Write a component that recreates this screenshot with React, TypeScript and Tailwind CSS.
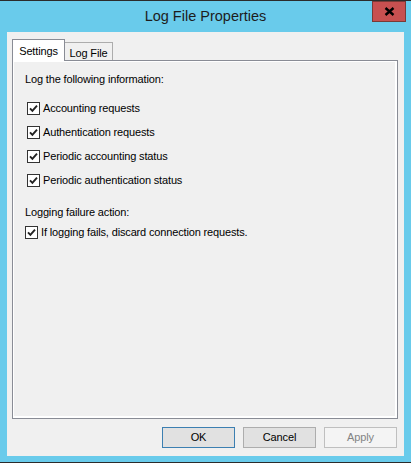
import React from "react";

const font = { fontFamily: '"Liberation Sans", Arial, sans-serif' };

function Check({ className = "" }: { className?: string }) {
  return (
    <span
      className={`flex h-[13px] w-[13px] shrink-0 items-center justify-center border border-[#333333] bg-white ${className}`}
    >
      <svg width="9" height="9" viewBox="0 0 9 9">
        <path d="M1 4.3 L3.4 6.8 L8 1.6" fill="none" stroke="#222222" strokeWidth="1.9" />
      </svg>
    </span>
  );
}

function CheckRow({ label, className = "" }: { label: string; className?: string }) {
  return (
    <div className={`flex h-[13px] items-center gap-[3px] ${className}`}>
      <Check />
      <span className="leading-none">{label}</span>
    </div>
  );
}

const logItems = [
  "Accounting requests",
  "Authentication requests",
  "Periodic accounting status",
  "Periodic authentication status",
];

export default function App() {
  return (
    <div
      className="flex h-[463px] w-[411px] flex-col border-y border-[#2b2b2b] bg-[#69cbeb] text-[11px] tracking-[-0.15px] text-black"
      style={font}
    >
      {/* title bar */}
      <div className="relative flex h-[31px] shrink-0 items-center justify-center">
        <span className="text-[14.5px] tracking-normal text-[#1d1d1d]">Log File Properties</span>
        <button className="absolute right-[5px] top-0 flex h-[21px] w-[34px] items-center justify-center border border-[#7a3a36] bg-[#c75050]">
          <svg width="11" height="9" viewBox="0 0 11 9">
            <path d="M1.5 1 L9.5 8 M9.5 1 L1.5 8" stroke="#000" strokeWidth="2.4" />
          </svg>
        </button>
      </div>

      {/* client area */}
      <div className="mx-[7px] mb-[6px] flex flex-1 flex-col bg-[#f0f0f0] pl-[5px] pr-[6px] pt-[7px]">
        {/* tabs */}
        <div className="flex h-[21px] items-end">
          <div className="relative z-10 -mb-px flex h-[22px] w-[53px] items-start justify-center border border-b-0 border-[#898c95] bg-white pt-[3px]">
            Settings
          </div>
          <div className="flex h-[18px] w-[48px] items-start justify-center border border-b-0 border-l-0 border-[#acacac] bg-[#f0f0f0] pt-[2px]">
            Log File
          </div>
        </div>

        {/* panel */}
        <div className="h-[359px] border border-[#898c95]">
          <div className="h-full border-b-2 border-l border-r-2 border-t border-white px-[11px] pt-[10px]">
            <div className="leading-[15px]">Log the following information:</div>
            <div className="mt-[15px] flex flex-col gap-[11px] pl-[2px]">
              {logItems.map((t) => (
                <CheckRow key={t} label={t} />
              ))}
            </div>
            <div className="mt-[18px] leading-[15px]">Logging failure action:</div>
            <CheckRow className="mt-[6px]" label="If logging fails, discard connection requests." />
          </div>
        </div>

        {/* buttons */}
        <div className="mt-[8px] flex justify-end gap-[8px] pr-px">
          <button className="h-[21px] w-[73px] border border-[#3c7fb1] bg-[#e1e1e1]">OK</button>
          <button className="h-[21px] w-[73px] border border-[#adadad] bg-[#e1e1e1]">Cancel</button>
          <button className="h-[21px] w-[73px] border border-[#bfbfbf] bg-[#f4f4f4] text-[#838383]">
            Apply
          </button>
        </div>
      </div>
    </div>
  );
}
